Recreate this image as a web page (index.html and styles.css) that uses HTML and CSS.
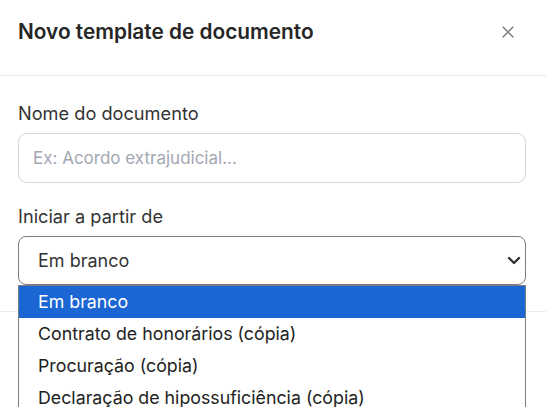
FILE: index.html
```html
<!DOCTYPE html>
<html lang="pt-BR">
<head>
<meta charset="utf-8">
<title>Novo template de documento</title>
<link rel="stylesheet" href="styles.css">
</head>
<body>
<div class="modal">
  <header class="modal-header">
    <h1 class="modal-title">Novo template de documento</h1>
    <button class="close-btn" type="button" aria-label="Fechar">
      <svg width="12" height="12" viewBox="0 0 12 12" aria-hidden="true"><path d="M1 1 L11 11 M11 1 L1 11" stroke="#7a7a7a" stroke-width="1.4" stroke-linecap="round" fill="none"/></svg>
    </button>
  </header>
  <div class="modal-body">
    <div class="field">
      <label class="field-label" for="nome">Nome do documento</label>
      <input class="text-input" id="nome" type="text" placeholder="Ex: Acordo extrajudicial...">
    </div>
    <div class="field field-gap">
      <label class="field-label">Iniciar a partir de</label>
      <div class="select-wrap">
        <div class="select-box">
          <span class="select-value">Em branco</span>
          <svg class="chevron" width="14" height="9" viewBox="0 0 14 9" aria-hidden="true"><path d="M2 2 L7 7 L12 2" stroke="#333" stroke-width="2.4" stroke-linecap="round" stroke-linejoin="round" fill="none"/></svg>
        </div>
        <ul class="options">
          <li class="option selected">Em branco</li>
          <li class="option">Contrato de honorários (cópia)</li>
          <li class="option">Procuração (cópia)</li>
          <li class="option">Declaração de hipossuficiência (cópia)</li>
        </ul>
      </div>
    </div>
  </div>
  <footer class="modal-footer"></footer>
</div>
</body>
</html>
```
FILE: styles.css
```css
html, body {
  margin: 0;
  padding: 0;
  background: #ffffff;
  overflow: hidden;
  height: 100%;
}
body {
  font-family: "Inter", "DejaVu Sans", sans-serif;
  color: #333333;
}
.modal {
  display: flex;
  flex-direction: column;
}
.modal-header {
  box-sizing: border-box;
  border-bottom: 1px solid #e6e6e6;
  height: 76px;
  display: flex;
  justify-content: space-between;
  align-items: flex-start;
  padding: 18px 32px 0 18px;
}
.modal-title {
  margin: 0;
  font-size: 20.8px;
  line-height: 28px;
  font-weight: 600;
  color: #262626;
}
.close-btn {
  border: 0;
  background: transparent;
  padding: 0;
  margin-top: 8px;
  width: 12px;
  height: 12px;
  display: flex;
  cursor: pointer;
}
.modal-body {
  padding: 25px 20px 26px 18px;
}
.field {
  display: flex;
  flex-direction: column;
}
.field-gap {
  margin-top: 21px;
}
.field-label {
  font-size: 18.2px;
  line-height: 24px;
  margin-bottom: 8px;
  color: #333333;
}
.text-input {
  box-sizing: border-box;
  height: 50px;
  border: 1px solid #d4d6dc;
  border-radius: 9px;
  padding: 0 14px;
  font: inherit;
  font-size: 17px;
  color: #333;
  outline: none;
}
.text-input::placeholder {
  color: #a3a7b2;
}
.select-wrap {
  position: relative;
}
.select-box {
  box-sizing: border-box;
  height: 49px;
  border: 1px solid #7d7d7d;
  border-radius: 8px;
  padding: 0 4px 0 19px;
  display: flex;
  align-items: center;
  justify-content: space-between;
  font-size: 18px;
  color: #333;
}
.chevron {
  display: block;
}
.options {
  position: absolute;
  top: 100%;
  left: 0;
  right: 0;
  margin: 0;
  padding: 0;
  list-style: none;
  background: #ffffff;
  border: 1px solid #7d7d7d;
}
.option {
  height: 32px;
  line-height: 32px;
  padding-left: 19px;
  font-size: 17.8px;
  color: #222222;
  white-space: nowrap;
}
.option.selected {
  background: #1b66d3;
  color: #ffffff;
}
.modal-footer {
  border-top: 1px solid #ececec;
  height: 100px;
}
```
